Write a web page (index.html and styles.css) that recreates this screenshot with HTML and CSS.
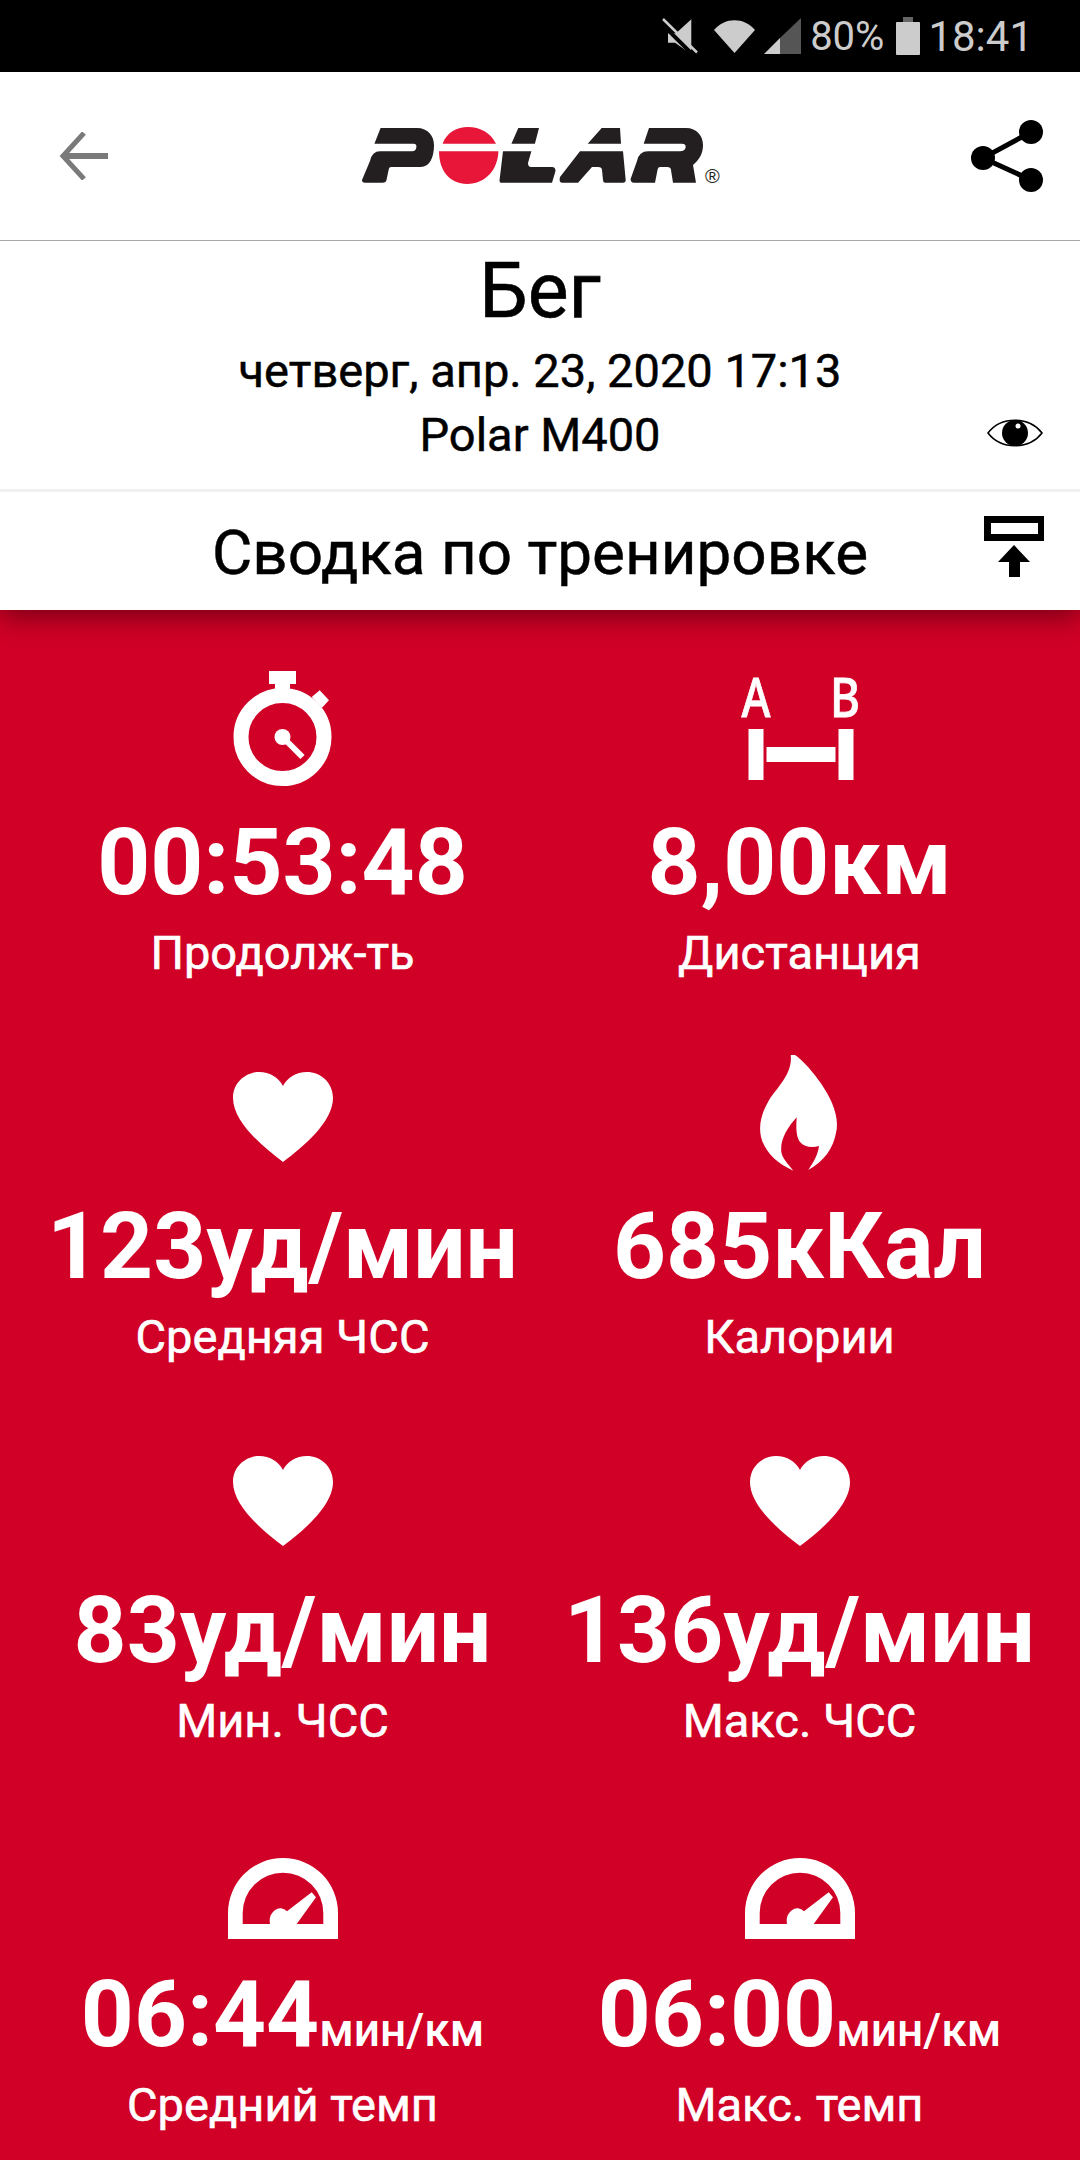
FILE: index.html
```html
<!DOCTYPE html>
<html lang="ru">
<head>
  <meta charset="UTF-8">
  <meta name="viewport" content="width=device-width, initial-scale=1.0">
  <title>Polar - Бег</title>
  <link rel="stylesheet" href="styles.css">
</head>
<body>
  <div class="status-bar">
    <svg class="st-mute" viewBox="0 0 36 36"><path d="M6 15.3h8L29.3 1.3V32L27.3 34.7 13 24.7H6z" fill="#ccc"/><path d="M-2 4l33 33" stroke="#000" stroke-width="4"/><path d="M1 1l34 33.5" stroke="#ccc" stroke-width="2.5"/></svg>
    <svg class="st-wifi" viewBox="0 0 41 33"><path d="M0 10C11-3 30-3 41 10L20.5 33z" fill="#ccc"/></svg>
    <svg class="st-signal" viewBox="0 0 37 36"><path d="M16 20L37 0v36H16z" fill="#555"/><path d="M0 36l16-16v16z" fill="#ccc"/></svg>
    <span class="st-pct">80%</span>
    <svg class="st-batt" viewBox="0 0 24 38"><path d="M0 6a1 1 0 0 1 1-1h22a1 1 0 0 1 1 1v31a1 1 0 0 1-1 1H1a1 1 0 0 1-1-1z" fill="#ccc"/><path d="M7 0h10v5H7z" fill="#666"/></svg>
    <span class="st-time">18:41</span>
  </div>

  <header class="app-bar">
    <svg class="back" viewBox="0 0 48 48"><path d="M6 21h42v6H6z" fill="#7a7a7a"/><path d="M24 1L3 24l21 23" fill="none" stroke="#7a7a7a" stroke-width="5"/></svg>
    <svg class="logo" viewBox="0 0 358 58">
      <g fill="#231f20">
        <path d="M18.6 1H55C66 1 72 9 72 18C72 30 68 40 58.5 40H29Q27 40 26.6 43L24.5 53Q24 55.7 20.7 55.7H3Q0 55.7 0 53L8 34Q10 24.3 18 24.3H50Q54 24.3 54.4 20Q54.6 16.7 51.7 16.7H12.4z"/>
        <path d="M156.3 1H177L172.9 16.7H149.4zM141 24.3H169.4L166 36Q166 40 169 40H190Q193.5 40 193.5 44L190 55.7H139Q137 55.7 137.7 52z"/>
        <path d="M239.7 1H258L259 16.7H225.7zM218 24.3H261L263.7 53Q263.7 55.7 261 55.7H243Q241 55.7 241 53L240 43Q240 40 236 40H230L216 55.7H200Q196.5 55.7 198 50z"/>
        <path d="M287 1H324C335 1 341 9 341 18C341 27 337 33 331 38L334 55.7H311L309 43Q309 40 305 40H298Q296 40 295.5 43L293 55.7H272Q268.6 55.7 268.6 52L275 34Q277 24.3 286 24.3H318Q323 24.3 323.7 20Q323.7 16.7 320 16.7H281.7z"/>
      </g>
      <path d="M80.6 16.7C85 5 95 0 106 0C118 0 129 6 134 16.7zM77 24.3H136.4C136 42 124 57 105 57C88 57 77 44 77 24.3z" fill="#e8173a"/>
      <text x="343" y="56" class="logo-reg">®</text>
    </svg>
    <svg class="share" viewBox="0 0 72 72"><g fill="#000"><circle cx="60" cy="12" r="12"/><circle cx="60" cy="60" r="12"/><circle cx="12" cy="38" r="12"/></g><path d="M60 12L12 38l48 22" fill="none" stroke="#000" stroke-width="5"/></svg>
  </header>

  <section class="title-block">
    <h1 class="title">Бег</h1>
    <div class="sub">четверг, апр. 23, 2020 17:13</div>
    <div class="sub">Polar M400</div>
    <svg class="eye" viewBox="0 0 56 36"><path d="M1 18C14 1 42 1 55 18 42 35 14 35 1 18z" fill="#fff" stroke="#000" stroke-width="1.6"/><circle cx="28" cy="18" r="13"/><circle cx="31" cy="11" r="2.5" fill="#fff"/></svg>
  </section>

  <section class="summary-head">
    <h2 class="summary-title">Сводка по тренировке</h2>
    <svg class="pin" viewBox="0 0 60 62"><path d="M0 0h60v25H0zM7 7v11h47V7z" fill="#000" fill-rule="evenodd"/><path d="M30 29l16 17H36v15H25V46H14z" fill="#000"/></svg>
  </section>

  <main class="stats">
    <div class="stat">
      <svg class="ic ic-watch" viewBox="0 0 99 115"><path d="M36 0h27v13h-6v9H42v-9h-6zM86.7 19.3L96 29.300l-7 7.400L78.700 26z" fill="#fff"/><circle cx="49.500" cy="66" r="41.500" fill="none" stroke="#fff" stroke-width="15"/><circle cx="49.500" cy="66" r="8" fill="#fff"/><path d="M49.500 66l20 20" stroke="#fff" stroke-width="6"/></svg>
      <div class="val">00:53:48</div>
      <div class="lbl">Продолж-ть</div>
    </div>
    <div class="stat">
      <svg class="ic ic-dist" viewBox="0 0 120 116"><text x="1.500" y="46" class="ab" textLength="29" lengthAdjust="spacingAndGlyphs">A</text><text x="90" y="46" class="ab" textLength="30" lengthAdjust="spacingAndGlyphs">B</text><path d="M8.500 58h15v51h-15zM98.500 58h15v51h-15zM26.500 76h69v15h-69z" fill="#fff"/></svg>
      <div class="val">8,00км</div>
      <div class="lbl">Дистанция</div>
    </div>
    <div class="stat">
      <svg class="ic ic-heart" viewBox="0 0 100 90"><use href="#heart"/></svg>
      <div class="val">123уд/мин</div>
      <div class="lbl">Средняя ЧСС</div>
    </div>
    <div class="stat">
      <svg class="ic ic-flame" viewBox="0 0 77 116"><path fill="#fff" d="M30.700 0H35C48 9 66 33 72 48C77 60 78 70 76 78C73 94 64 106 48.300 115C53 108 58 100 59 91C52 93 44 92 40 87C36 82 36 72 36.700 62.300C28 72 20 84 21.300 96.700C22 103 28 109 33.300 115.700C18 109 5 98 1 82C-2 68 3 56 8 47C15 34 33 20 30.700 0z"/></svg>
      <div class="val">685кКал</div>
      <div class="lbl">Калории</div>
    </div>
    <div class="stat">
      <svg class="ic ic-heart" viewBox="0 0 100 90"><use href="#heart"/></svg>
      <div class="val">83уд/мин</div>
      <div class="lbl">Мин. ЧСС</div>
    </div>
    <div class="stat">
      <svg class="ic ic-heart" viewBox="0 0 100 90"><use href="#heart"/></svg>
      <div class="val">136уд/мин</div>
      <div class="lbl">Макс. ЧСС</div>
    </div>
    <div class="stat">
      <svg class="ic ic-gauge" viewBox="0 0 110 81"><use href="#gauge"/></svg>
      <div class="val">06:44<small>мин/км</small></div>
      <div class="lbl">Средний темп</div>
    </div>
    <div class="stat">
      <svg class="ic ic-gauge" viewBox="0 0 110 81"><use href="#gauge"/></svg>
      <div class="val">06:00<small>мин/км</small></div>
      <div class="lbl">Макс. темп</div>
    </div>
  </main>

  <svg class="defs">
    <defs>
      <path id="heart" d="M50 90C30 75 0 50 0 26 0 10 13 0 26 0c11 0 20 6 24 14C54 6 63 0 74 0c13 0 26 10 26 26 0 24-30 49-50 64z" fill="#fff"/>
      <path id="gauge" fill="#fff" fill-rule="evenodd" d="M0 81V55A55 55 0 0 1 110 55V81zM14.700 66H42A10.500 13 0 0 1 59 53.300L83.700 34.300L88 39.300L68.700 66H95.300V55A40.300 40.300 0 0 0 14.700 55z"/>
    </defs>
  </svg>
</body>
</html>
```
FILE: styles.css
```css
* {
  box-sizing: border-box;
}

html, body {
  margin: 0;
  height: 2160px;
}

body {
  display: flex;
  flex-direction: column;
  font-family: 'Roboto', sans-serif;
  background: #d00026;
  overflow: hidden;
}

.defs {
  display: none;
}

.status-bar {
  height: 72px;
  flex: none;
  background: #000;
  color: #ccc;
  display: flex;
  align-items: center;
  justify-content: flex-end;
  padding-right: 47px;
  font-size: 40px;
}

.st-mute { width: 36px; height: 36px; margin-right: 16px; }
.st-wifi { width: 41px; height: 33px; margin-right: 9px; }
.st-signal { width: 37px; height: 36px; margin-right: 9px; }
.st-pct { margin-right: 12px; }
.st-batt { width: 24px; height: 38px; margin-right: 8px; }
.st-time { font-size: 42px; }

.app-bar {
  height: 169px;
  flex: none;
  background: #fff;
  border-bottom: 1px solid #aaa;
  display: grid;
  grid-template-columns: 303px 358px 1fr;
  align-items: center;
  padding: 0 37px 0 59px;
}

.back { width: 50px; height: 48px; }
.logo { width: 358px; height: 58px; overflow: visible; }
.share { width: 72px; height: 72px; justify-self: end; }

.logo-reg {
  font-size: 20px;
  fill: #231f20;
  font-family: 'Liberation Sans', sans-serif;
}

.title-block {
  height: 251px;
  flex: none;
  background: #fff;
  border-bottom: 3px solid #f0f0f0;
  text-align: center;
  position: relative;
  padding-top: 8px;
}

.title {
  margin: 0 0 6px;
  font-size: 77px;
  font-weight: 400;
  line-height: 84px;
  color: #000;
  -webkit-text-stroke: 0.6px #000;
}

.sub {
  font-size: 47px;
  line-height: 64px;
  color: #000;
  -webkit-text-stroke: 0.5px #000;
}

.eye {
  position: absolute;
  right: 37px;
  top: 174px;
  width: 56px;
  height: 36px;
}

.summary-head {
  height: 118px;
  flex: none;
  background: #fff;
  display: flex;
  align-items: center;
  justify-content: center;
  padding-top: 3px;
  position: relative;
  z-index: 1;
  box-shadow: 0 6px 26px rgba(0, 0, 0, 0.45);
  clip-path: inset(0 0 -60px 0);
}

.summary-title {
  margin: 0;
  font-size: 62px;
  font-weight: 400;
  color: #000;
  -webkit-text-stroke: 0.5px #000;
}

.pin {
  position: absolute;
  right: 36px;
  top: 24px;
  width: 60px;
  height: 62px;
}

.stats {
  flex: 1;
  display: grid;
  grid-template-columns: repeat(2, 517px);
  grid-auto-rows: 384px;
  padding: 61px 0 0 24px;
  color: #fff;
}

.stat {
  display: flex;
  flex-direction: column;
  align-items: center;
}

.ic {
  flex: none;
  margin-bottom: 20px;
}

.ic-watch { width: 99px; height: 115px; margin-bottom: 21px; }
.ic-dist { width: 120px; height: 116px; overflow: visible; }
.ic-heart { width: 100px; height: 90px; margin-top: 17px; margin-bottom: 29px; }
.ic-flame { width: 77px; height: 116px; margin-right: 3px; }
.ic-gauge { width: 110px; height: 81px; margin-top: 35px; }

.ab {
  font-family: 'Noto Sans', sans-serif;
  font-size: 54px;
  font-weight: 500;
  fill: #fff;
  stroke: #fff;
  stroke-width: 0.8px;
}

.val {
  font-size: 92.500px;
  font-weight: 700;
  line-height: 112px;
  white-space: nowrap;
}

.val small {
  font-size: 46px;
  font-weight: 500;
  line-height: 1;
}

.lbl {
  margin-top: 6px;
  font-size: 47px;
  font-weight: 400;
  line-height: 56px;
  -webkit-text-stroke: 0.6px #fff;
}
```
